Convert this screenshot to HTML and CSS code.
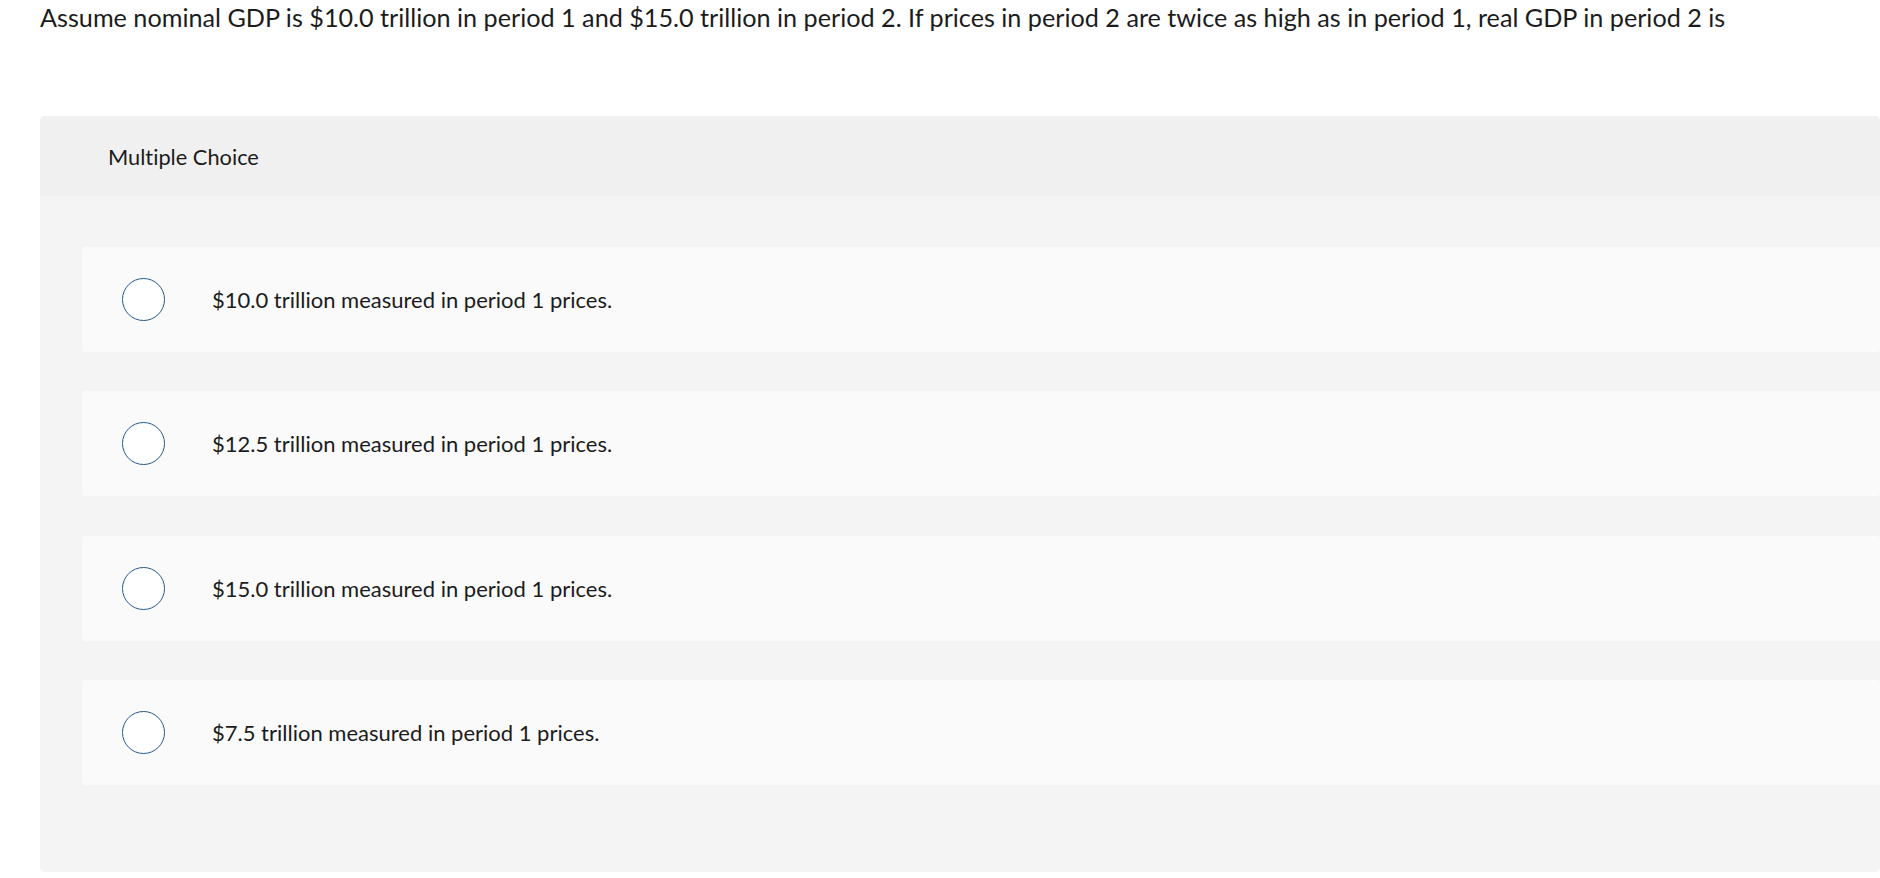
FILE: index.html
```html
<!DOCTYPE html>
<html lang="en">
<head>
<meta charset="utf-8">
<title>Multiple Choice</title>
<link rel="stylesheet" href="styles.css">
</head>
<body>
<div class="question">Assume nominal GDP is $10.0 trillion in period 1 and $15.0 trillion in period 2. If prices in period 2 are twice as high as in period 1, real GDP in period 2 is</div>
<section class="panel">
  <header class="panel-head">Multiple Choice</header>
  <div class="panel-body">
    <label class="choice"><span class="radio"></span><span class="choice-text">$10.0 trillion measured in period 1 prices.</span></label>
    <label class="choice"><span class="radio"></span><span class="choice-text">$12.5 trillion measured in period 1 prices.</span></label>
    <label class="choice"><span class="radio"></span><span class="choice-text">$15.0 trillion measured in period 1 prices.</span></label>
    <label class="choice"><span class="radio"></span><span class="choice-text">$7.5 trillion measured in period 1 prices.</span></label>
  </div>
</section>
</body>
</html>
```
FILE: styles.css
```css
html, body {
  margin: 0;
  padding: 0;
  background: #ffffff;
}
body {
  font-family: Lato, "Liberation Sans", sans-serif;
  color: #1c1c1c;
  font-variant-ligatures: none;
  overflow: hidden;
}
.question {
  padding: 2px 0 0 40px;
  font-size: 25.2px;
  line-height: 30px;
  height: 116px;
  box-sizing: border-box;
  white-space: nowrap;
}
.panel {
  margin-left: 40px;
  width: 1840px;
  border-radius: 5px;
  overflow: hidden;
  background: #f4f4f4;
}
.panel-head {
  height: 80px;
  background: #f0f0f0;
  display: flex;
  align-items: center;
  padding-left: 68px;
  font-size: 21.8px;
}
.panel-body {
  padding: 51px 0 87px 42px;
  display: flex;
  flex-direction: column;
  gap: 39.3px;
}
.choice {
  height: 105px;
  background: #fafafa;
  border-radius: 4px;
  display: flex;
  align-items: center;
  padding-left: 40px;
}
.radio {
  width: 41px;
  height: 41px;
  border: 1.5px solid #285a8c;
  border-radius: 50%;
  background: #ffffff;
  flex: none;
}
.choice-text {
  margin-left: 47px;
  font-size: 22px;
}
```
